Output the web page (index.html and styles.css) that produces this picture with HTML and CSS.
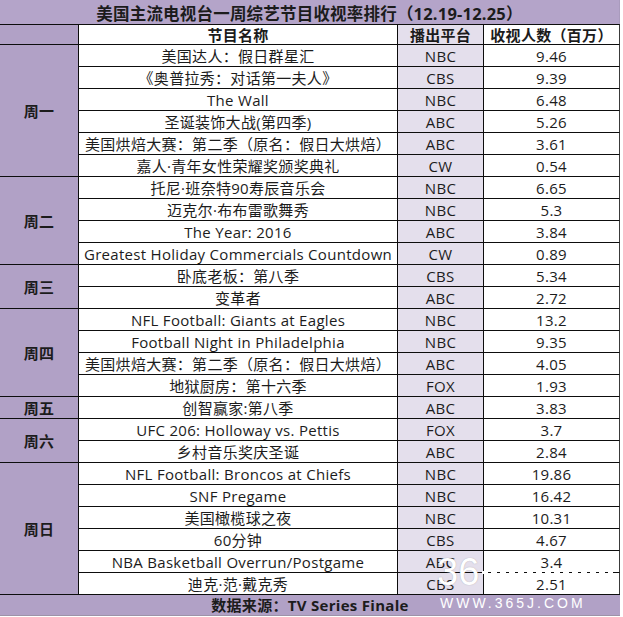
FILE: index.html
```html
<!DOCTYPE html>
<html lang="zh-CN">
<head>
<meta charset="utf-8">
<title>美国主流电视台一周综艺节目收视率排行</title>
<link rel="stylesheet" href="styles.css">
</head>
<body>
<div class="sheet">
  <div class="title">美国主流电视台一周综艺节目收视率排行（12.19-12.25）</div>

  <div class="c day"></div>
  <div class="c prog hd">节目名称</div>
  <div class="c plat hd">播出平台</div>
  <div class="c val hd">收视人数（百万）</div>

  <div class="c day r6">周一</div>
  <div class="c prog">美国达人：假日群星汇</div><div class="c plat">NBC</div><div class="c val">9.46</div>
  <div class="c prog">《奥普拉秀：对话第一夫人》</div><div class="c plat">CBS</div><div class="c val">9.39</div>
  <div class="c prog">The Wall</div><div class="c plat">NBC</div><div class="c val">6.48</div>
  <div class="c prog">圣诞装饰大战(第四季)</div><div class="c plat">ABC</div><div class="c val">5.26</div>
  <div class="c prog">美国烘焙大赛：第二季（原名：假日大烘焙）</div><div class="c plat">ABC</div><div class="c val">3.61</div>
  <div class="c prog">嘉人·青年女性荣耀奖颁奖典礼</div><div class="c plat">CW</div><div class="c val">0.54</div>

  <div class="c day r4">周二</div>
  <div class="c prog">托尼·班奈特90寿辰音乐会</div><div class="c plat">NBC</div><div class="c val">6.65</div>
  <div class="c prog">迈克尔·布布雷歌舞秀</div><div class="c plat">NBC</div><div class="c val">5.3</div>
  <div class="c prog">The Year: 2016</div><div class="c plat">ABC</div><div class="c val">3.84</div>
  <div class="c prog">Greatest Holiday Commercials Countdown</div><div class="c plat">CW</div><div class="c val">0.89</div>

  <div class="c day r2">周三</div>
  <div class="c prog">卧底老板：第八季</div><div class="c plat">CBS</div><div class="c val">5.34</div>
  <div class="c prog">变革者</div><div class="c plat">ABC</div><div class="c val">2.72</div>

  <div class="c day r4">周四</div>
  <div class="c prog">NFL Football: Giants at Eagles</div><div class="c plat">NBC</div><div class="c val">13.2</div>
  <div class="c prog">Football Night in Philadelphia</div><div class="c plat">NBC</div><div class="c val">9.35</div>
  <div class="c prog">美国烘焙大赛：第二季（原名：假日大烘焙）</div><div class="c plat">ABC</div><div class="c val">4.05</div>
  <div class="c prog">地狱厨房：第十六季</div><div class="c plat">FOX</div><div class="c val">1.93</div>

  <div class="c day">周五</div>
  <div class="c prog">创智赢家:第八季</div><div class="c plat">ABC</div><div class="c val">3.83</div>

  <div class="c day r2">周六</div>
  <div class="c prog">UFC 206: Holloway vs. Pettis</div><div class="c plat">FOX</div><div class="c val">3.7</div>
  <div class="c prog">乡村音乐奖庆圣诞</div><div class="c plat">ABC</div><div class="c val">2.84</div>

  <div class="c day r6">周日</div>
  <div class="c prog">NFL Football: Broncos at Chiefs</div><div class="c plat">NBC</div><div class="c val">19.86</div>
  <div class="c prog">SNF Pregame</div><div class="c plat">NBC</div><div class="c val">16.42</div>
  <div class="c prog">美国橄榄球之夜</div><div class="c plat">NBC</div><div class="c val">10.31</div>
  <div class="c prog">60分钟</div><div class="c plat">CBS</div><div class="c val">4.67</div>
  <div class="c prog">NBA Basketball Overrun/Postgame</div><div class="c plat">ABC</div><div class="c val">3.4</div>
  <div class="c prog">迪克·范·戴克秀</div><div class="c plat">CBS</div><div class="c val">2.51</div>

  <div class="c foot">数据来源：TV Series Finale</div>

  <div class="wm-big">36</div>
  <div class="wm-line"></div>
  <div class="wm-url">WWW.365J.COM</div>
</div>
</body>
</html>
```

FILE: styles.css
```css
* { box-sizing: border-box; }

html, body {
  margin: 0;
  padding: 0;
  background: #ffffff;
}

body {
  font-family: "Open Sans", "Noto Sans CJK SC", sans-serif;
  color: #1c1c1c;
  font-size: 15px;
  letter-spacing: 0.3px;
}

.sheet {
  position: relative;
  width: 620px;
  display: grid;
  grid-template-columns: 78px 319px 86px 137px;
  grid-template-rows: 24px 20px repeat(25, 22px) 21px;
  border-bottom: 1px solid #9d93a8;
}

.title {
  grid-column: 1 / 5;
  background: #b4a4c9;
  font-weight: bold;
  font-size: 16.5px;
  letter-spacing: 0.2px;
  display: flex;
  align-items: center;
  justify-content: center;
  white-space: nowrap;
  border-right: 1px solid #a99bbd;
  padding-top: 1px;
}

.c {
  border-top: 1px solid #0d0d0d;
  display: flex;
  align-items: center;
  justify-content: center;
  white-space: nowrap;
  line-height: 1;
  padding-top: 1px;
}

.day {
  grid-column: 1;
  background: #b1a1c6;
  font-weight: bold;
}

.r2 { grid-row: span 2; }
.r4 { grid-row: span 4; }
.r6 { grid-row: span 6; }

.prog {
  border-left: 1px solid #0d0d0d;
  background: #ffffff;
}

.plat {
  border-left: 1px solid #0d0d0d;
  background: #e4dfec;
}

.val {
  border-left: 1px solid #0d0d0d;
  border-right: 1px solid #3a3a3a;
  background: #ffffff;
}

.hd {
  font-weight: bold;
}

.foot {
  grid-column: 1 / 5;
  background: #b1a1c6;
  font-weight: bold;
}

.wm-big {
  position: absolute;
  left: 437px;
  top: 553px;
  font-family: "Liberation Sans", sans-serif;
  font-size: 38px;
  letter-spacing: 0;
  line-height: 1;
  color: #ffffff;
  text-shadow: 0 0 1px rgba(120, 120, 120, 0.6);
}

.wm-line {
  position: absolute;
  left: 482px;
  top: 571px;
  width: 131px;
  height: 3px;
  background: repeating-linear-gradient(90deg, #ffffff 0 6px, transparent 6px 9px);
}

.wm-url {
  position: absolute;
  left: 440px;
  top: 596px;
  font-family: "Liberation Sans", sans-serif;
  font-size: 14px;
  letter-spacing: 3px;
  line-height: 1;
  color: #ffffff;
}
```
